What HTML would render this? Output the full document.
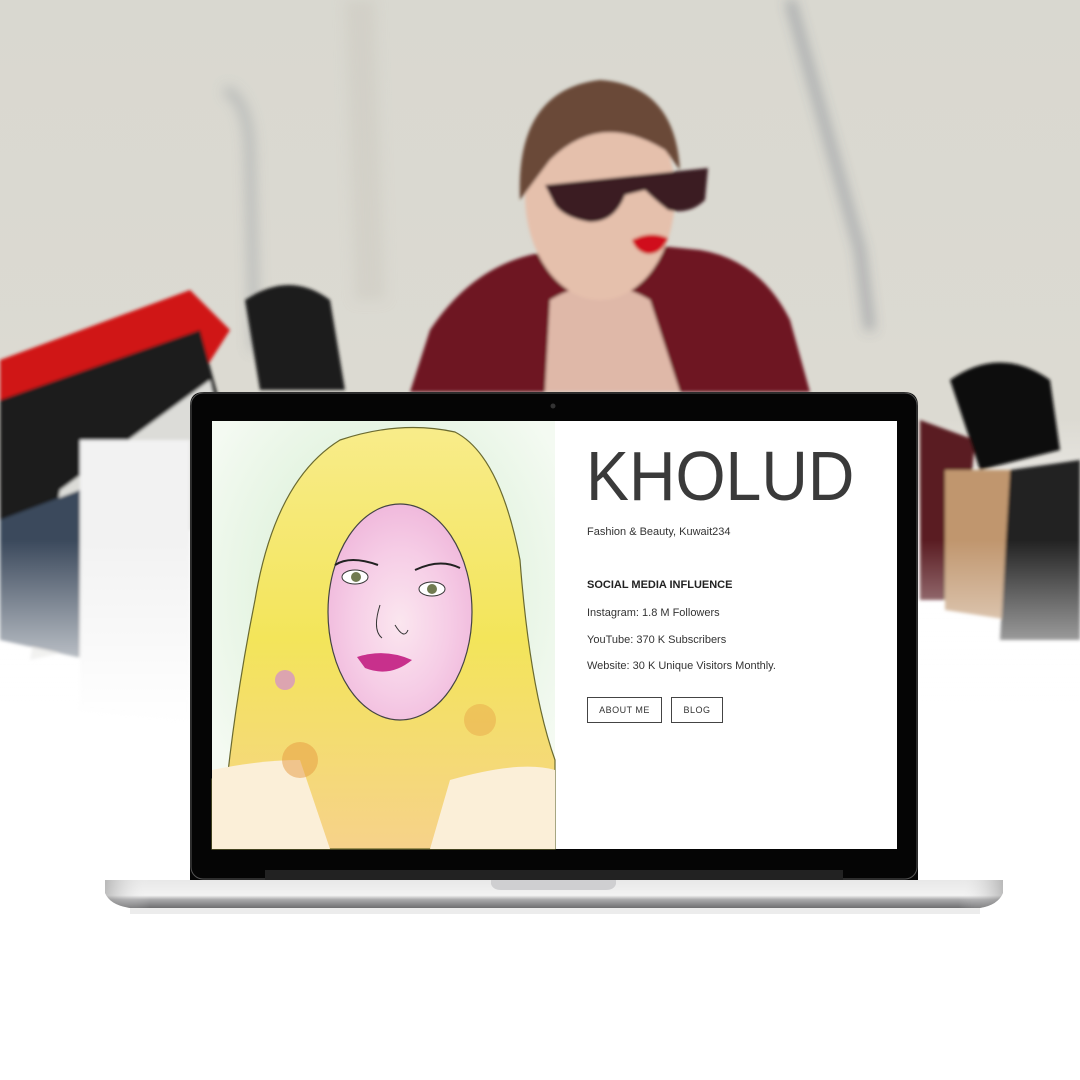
<!DOCTYPE html>
<html><head><meta charset="utf-8"><style>
html,body{margin:0;padding:0;width:1080px;height:1080px;overflow:hidden;background:#fff;font-family:"Liberation Sans",Arial,sans-serif}
#bg{position:absolute;left:0;top:0}
.t{position:absolute;color:#333;font-size:11px;white-space:nowrap}
.btn{position:absolute;border:1.5px solid #444;box-sizing:border-box;font-size:9px;letter-spacing:.5px;color:#333;display:flex;align-items:center;justify-content:center;height:26px;top:697px}
</style></head><body>
<svg id="bg" width="1080" height="1080" viewBox="0 0 1080 1080">
<defs>
<linearGradient id="bgg" x1="0" y1="0" x2="0" y2="1">
<stop offset="0" stop-color="#d9d8d0"/><stop offset=".55" stop-color="#dcdad2"/><stop offset=".64" stop-color="#e8e6e2"/><stop offset=".7" stop-color="#ffffff"/></linearGradient>
<linearGradient id="fade" x1="0" y1="0" x2="0" y2="1">
<stop offset="0" stop-color="#fff" stop-opacity="0"/><stop offset=".75" stop-color="#fff" stop-opacity=".9"/><stop offset="1" stop-color="#fff" stop-opacity="1"/></linearGradient>
<linearGradient id="base" x1="0" y1="0" x2="0" y2="1">
<stop offset="0" stop-color="#e8e8e8"/><stop offset=".55" stop-color="#f2f2f2"/><stop offset=".7" stop-color="#a9a9ab"/><stop offset="1" stop-color="#6e6e70"/></linearGradient>
<linearGradient id="baseh" x1="0" y1="0" x2="1" y2="0">
<stop offset="0" stop-color="#888" stop-opacity=".5"/><stop offset=".05" stop-color="#fff" stop-opacity="0"/><stop offset=".95" stop-color="#fff" stop-opacity="0"/><stop offset="1" stop-color="#888" stop-opacity=".5"/></linearGradient>
<radialGradient id="green" cx=".5" cy=".4" r=".6"><stop offset="0" stop-color="#cfeccb"/><stop offset="1" stop-color="#f4faf2"/></radialGradient>
<radialGradient id="face" cx=".5" cy=".55" r=".55"><stop offset="0" stop-color="#fbe6ef"/><stop offset=".6" stop-color="#f6cde6"/><stop offset="1" stop-color="#f0b9dc"/></radialGradient>
<linearGradient id="hij" x1="0" y1="0" x2="0" y2="1"><stop offset="0" stop-color="#f8ec8a"/><stop offset=".5" stop-color="#f3e55a"/><stop offset="1" stop-color="#f6d28a"/></linearGradient>
<filter id="bl"><feGaussianBlur stdDeviation="6"/></filter>
<filter id="bl2"><feGaussianBlur stdDeviation="1.5"/></filter>
</defs>
<rect width="1080" height="1080" fill="#fff"/>
<rect width="1080" height="760" fill="url(#bgg)"/>
<g filter="url(#bl)">
<path d="M225 90 Q250 100 250 160 L255 350" stroke="#8a9098" stroke-width="10" fill="none" opacity=".4"/>
<path d="M790 0 L860 250 L870 330" stroke="#556070" stroke-width="8" fill="none" opacity=".45"/>
<path d="M360 0 L370 300" stroke="#c8c6bc" stroke-width="30" fill="none" opacity=".4"/>
</g>
<g filter="url(#bl2)">
<path d="M410 392 L430 330 Q470 270 530 255 L600 240 L700 250 Q760 260 790 320 L810 392Z" fill="#6e1822"/>
<path d="M550 300 Q600 270 650 300 L680 392 L545 392Z" fill="#dfb8a8"/>
<ellipse cx="600" cy="195" rx="75" ry="105" fill="#e5c0ac"/>
<path d="M520 200 Q515 90 600 80 Q675 85 680 170 L665 150 Q600 110 550 160 Z" fill="#6b4a38"/>
<path d="M545 185 L708 168 L705 200 Q690 215 668 210 Q655 200 645 190 L625 195 Q615 222 590 222 Q565 218 555 205Z" fill="#3a1a22"/>
<path d="M632 240 Q650 230 668 238 Q662 254 648 254 Q636 252 632 240Z" fill="#d0101a"/>
<path d="M0 360 L190 290 L230 330 L160 440 L0 520Z" fill="#d01414"/>
<path d="M0 400 L200 330 L230 440 L60 560 L0 520Z" fill="#1c1c1c"/>
<path d="M60 490 L210 380 L230 470 L120 640 L30 660Z" fill="#dcdcd8"/>
<path d="M0 520 L80 490 L90 660 L0 640Z" fill="#3b4a5c"/>
<path d="M80 440 L190 440 L190 720 L80 710Z" fill="#f2f2f2"/>
<path d="M245 300 Q290 270 330 300 L345 390 L260 390Z" fill="#1a1a1a"/>
<path d="M920 420 L975 440 L960 600 L920 600Z" fill="#5a1a20"/>
<path d="M950 380 Q1000 345 1050 380 L1060 450 L980 470Z" fill="#111"/>
<path d="M945 470 L1020 470 L1010 620 L945 610Z" fill="#c0966e"/>
<path d="M1010 470 L1080 460 L1080 640 L1000 640Z" fill="#222"/>
</g>
<rect x="0" y="540" width="1080" height="220" fill="url(#fade)"/>
<path d="M190 880 L190 406 Q190 392 204 392 L904 392 Q918 392 918 406 L918 880Z" fill="#050505"/>
<rect x="191" y="393" width="726" height="486" rx="12" fill="none" stroke="#555" stroke-width="1"/>
<circle cx="553" cy="406" r="2.5" fill="#333"/>
<rect x="265" y="870" width="578" height="10" fill="#222"/>
<path d="M105 880 L1003 880 L1003 893 Q998 905 980 908 L130 908 Q110 905 105 893Z" fill="url(#base)"/>
<path d="M105 880 L1003 880 L1003 893 Q998 905 980 908 L130 908 Q110 905 105 893Z" fill="url(#baseh)"/>
<path d="M491 880 L616 880 L616 884 Q614 890 606 890 L501 890 Q493 890 491 884Z" fill="#cfcfd1"/>
<rect x="130" y="908" width="850" height="6" fill="#ececec"/>
<rect x="212" y="421" width="685" height="428" fill="#fff"/>
<rect x="212" y="421" width="343" height="428" fill="url(#green)"/>
<path d="M225 800 Q235 700 255 600 Q275 480 340 440 Q400 420 455 432 Q500 455 520 560 Q530 690 555 760 L555 849 L212 849 L212 780Z" fill="url(#hij)" stroke="#6a6a30" stroke-width="1.2"/>
<path d="M212 770 Q260 760 300 760 L330 849 L212 849Z" fill="#fbefd8"/>
<path d="M450 780 Q520 760 555 770 L555 849 L430 849Z" fill="#fbefd8"/>
<ellipse cx="400" cy="612" rx="72" ry="108" fill="url(#face)" stroke="#444" stroke-width="1.2"/>
<path d="M335 565 Q350 555 378 565" stroke="#222" stroke-width="2" fill="none"/>
<path d="M415 570 Q440 558 460 568" stroke="#222" stroke-width="2" fill="none"/>
<ellipse cx="355" cy="577" rx="13" ry="7" fill="#fff" stroke="#333"/><circle cx="356" cy="577" r="5" fill="#707a50"/>
<ellipse cx="432" cy="589" rx="13" ry="7" fill="#fff" stroke="#333"/><circle cx="432" cy="589" r="5" fill="#707a50"/>
<path d="M380 605 Q372 630 382 638 M395 625 Q404 640 408 630" stroke="#333" fill="none"/>
<path d="M357 657 Q385 648 412 660 Q390 678 365 668Z" fill="#c8308c"/>
<circle cx="285" cy="680" r="10" fill="#d28ad0" opacity=".7"/>
<circle cx="300" cy="760" r="18" fill="#e59a40" opacity=".5"/>
<circle cx="480" cy="720" r="16" fill="#e59a40" opacity=".4"/>
</svg>
<div class="t" style="left:586px;top:436px;font-size:70px;color:#3a3a3a;transform:scaleX(.92);transform-origin:0 0">KHOLUD</div>
<div class="t" style="left:587px;top:526px">Fashion &amp; Beauty, Kuwait234</div>
<div class="t" style="left:587px;top:579px;font-weight:bold;font-size:11px;color:#222">SOCIAL MEDIA INFLUENCE</div>
<div class="t" style="left:587px;top:607px">Instagram: 1.8 M Followers</div>
<div class="t" style="left:587px;top:634px">YouTube: 370 K Subscribers</div>
<div class="t" style="left:587px;top:660px">Website: 30 K Unique Visitors Monthly.</div>
<div class="btn" style="left:587px;width:75px">ABOUT ME</div>
<div class="btn" style="left:671px;width:52px">BLOG</div>
</body></html>
